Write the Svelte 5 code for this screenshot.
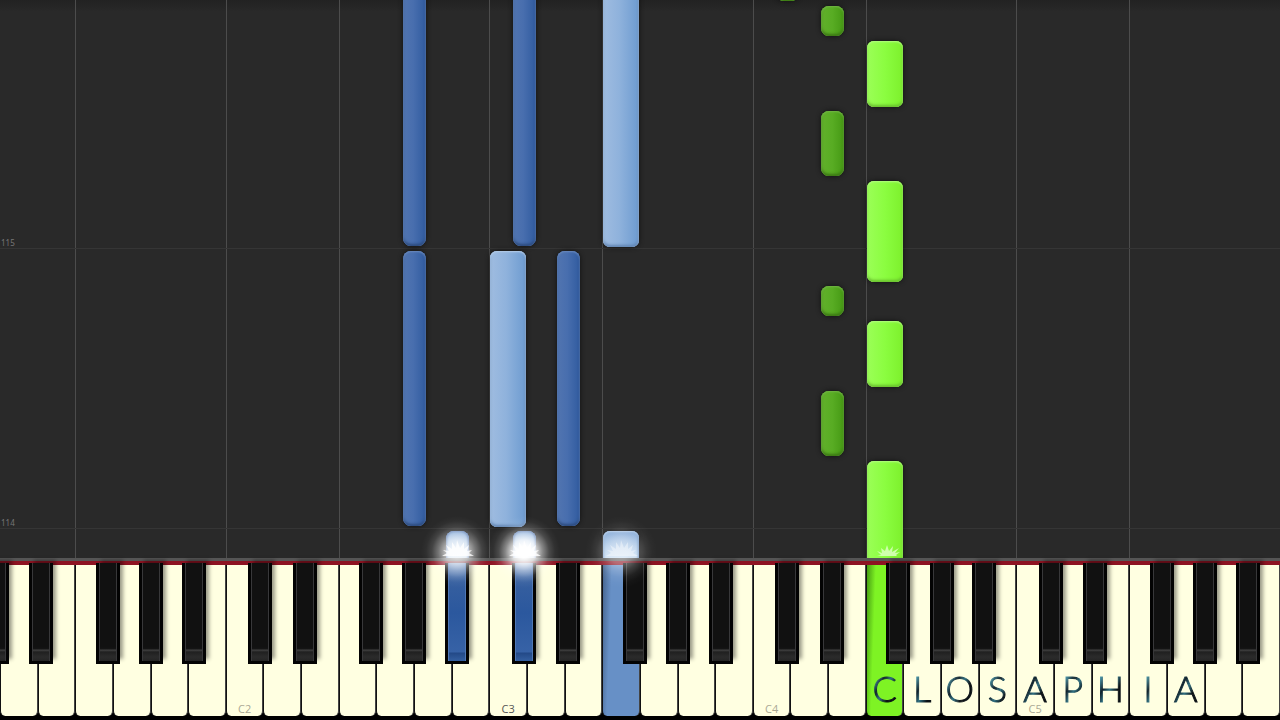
<script lang="ts">
	interface Note {
		key: string;
		at: number;
		length: number;
		hand: 'left' | 'right';
		lit?: boolean;
	}

	const WHITE_COUNT = 34;
	const unit = 100 / WHITE_COUNT;
	const names = ['C', 'D', 'E', 'F', 'G', 'A', 'B'];
	// where each black key starts, in white keys from its C
	const sharps: Record<string, number> = { 'C#': 0.59, 'D#': 1.77, 'F#': 3.54, 'G#': 4.69, 'A#': 5.83 };
	const watermark = 'CLOSAPHIA';
	const watermarkStart = 23;

	// the first white key on screen is D1
	const whites = Array.from({ length: WHITE_COUNT }, (_, i) => {
		const name = names[(i + 1) % 7];
		const octave = 1 + Math.floor((i + 1) / 7);
		return { id: name + octave, name, index: i, letter: watermark[i - watermarkStart] ?? '' };
	});

	const blacks = [1, 2, 3, 4, 5].flatMap((octave) =>
		Object.entries(sharps).map(([name, offset]) => ({ id: name + octave, left: (octave - 1) * 7 - 1 + offset }))
	);

	const notes: Note[] = [
		{ key: 'G#2', at: 312, length: 290, hand: 'left' },
		{ key: 'G#2', at: 32, length: 275, hand: 'left' },
		{ key: 'A#2', at: -8, length: 35, hand: 'left', lit: true },
		{ key: 'C#3', at: 312, length: 290, hand: 'left' },
		{ key: 'C#3', at: -8, length: 35, hand: 'left', lit: true },
		{ key: 'C3', at: 31, length: 276, hand: 'left' },
		{ key: 'D#3', at: 32, length: 275, hand: 'left' },
		{ key: 'F3', at: 311, length: 290, hand: 'left' },
		{ key: 'F3', at: -8, length: 35, hand: 'left', lit: true },
		{ key: 'C#4', at: 557, length: 30, hand: 'right' },
		{ key: 'D#4', at: 522, length: 30, hand: 'right' },
		{ key: 'D#4', at: 382, length: 65, hand: 'right' },
		{ key: 'D#4', at: 242, length: 30, hand: 'right' },
		{ key: 'D#4', at: 102, length: 65, hand: 'right' },
		{ key: 'F4', at: 451, length: 66, hand: 'right' },
		{ key: 'F4', at: 276, length: 101, hand: 'right' },
		{ key: 'F4', at: 171, length: 66, hand: 'right' },
		{ key: 'F4', at: -8, length: 105, hand: 'right' }
	];

	const measures = [
		{ number: 115, at: 309 },
		{ number: 114, at: 29 }
	];

	const sparks = [
		{ key: 'A#2', glow: 'strong' },
		{ key: 'C#3', glow: 'full' },
		{ key: 'F3', glow: 'soft' },
		{ key: 'F4', glow: 'none' }
	];

	const pressed: Record<string, string> = { 'A#2': 'left', 'C#3': 'left', F3: 'left', F4: 'right' };

	function keyLeft(id: string) {
		const black = blacks.find((k) => k.id === id);
		return (black ? black.left : whites.find((k) => k.id === id)!.index) * unit;
	}
</script>

<main>
	<section class="roll" aria-label="Notes">
		{#each whites.filter((k) => k.index > 0 && (k.name === 'C' || k.name === 'F')) as line}
			<div class="line" style="left: {line.index * unit}%"></div>
		{/each}
		{#each measures as measure}
			<div class="measure" style="bottom: {measure.at}px"><span>{measure.number}</span></div>
		{/each}
		{#each notes as note}
			<div
				class="note {note.hand}"
				class:sharp={note.key.includes('#')}
				class:lit={note.lit}
				style="left: {keyLeft(note.key)}%; bottom: {note.at}px; height: {note.length}px"
			></div>
		{/each}
	</section>

	<section class="keyboard" aria-label="Keyboard">
		<div class="felt"></div>
		<div class="whites">
			{#each whites as key}
				<button class="white {pressed[key.id] ?? ''}" aria-label={key.id}>
					{#if key.letter}
						<span class="letter">{key.letter}</span>
					{/if}
					{#if key.name === 'C'}
						<span class="octave" class:active={key.id === 'C3'}>{key.id}</span>
					{/if}
				</button>
			{/each}
		</div>
		{#each blacks as key}
			<button class="black {pressed[key.id] ?? ''}" aria-label={key.id} style="left: {key.left * unit}%"><i></i></button>
		{/each}
		{#each sparks as spark}
			<div
				class="spark {spark.glow}"
				class:wide={!spark.key.includes('#')}
				style="left: {keyLeft(spark.key)}%"
			>
				<svg viewBox="0 0 36 24" width="36" height="24" aria-hidden="true">
					{#if spark.glow === 'none'}
						<path d="M10 22l4-1-4-4 5 2-1-5 4 3 2-6 2 6 4-5-1 6 7-4-4 5 5-1-4 3 1 1z" />
					{:else}
						<path d="M3 22l5-3-4-3 6 1-3-6 6 4 0-7 4 6 1-8 3 8 4-6 0 7 5-4-2 6 5-1-3 3 5 3z" />
					{/if}
				</svg>
			</div>
		{/each}
	</section>
</main>

<style>
	:global(body) {
		margin: 0;
		background: #000;
	}

	main {
		display: flex;
		flex-direction: column;
		min-height: 100vh;
		overflow: hidden;
		font-family: 'Open Sans', 'Noto Sans', sans-serif;
	}

	.roll {
		position: relative;
		flex: 1;
		overflow: hidden;
		background: linear-gradient(#222, #292929 12px);
	}

	.line {
		position: absolute;
		top: 0;
		bottom: 0;
		width: 1px;
		background: #4c4c4c;
	}

	.measure {
		position: absolute;
		left: 0;
		right: 0;
		border-bottom: 1px solid #353535;
		color: #777;
		font-family: 'Noto Sans', sans-serif;
		font-size: 8px;
		line-height: 10px;
	}

	.measure span {
		margin-left: 1px;
	}

	.note {
		position: absolute;
		box-sizing: border-box;
		width: 36px;
		margin-left: 1px;
		border-radius: 7px;
	}

	.note.sharp {
		width: 23px;
		border-radius: 8px;
	}

	.note.left {
		background: linear-gradient(90deg, #9fbce0, #8fb2dc 45%, #6d9bd0);
		box-shadow: inset 0 1px 2px #b7cfea, inset 0 -2px 3px #5f83b1, inset 1px 0 2px #a9c6e8, inset -1px 0 2px #7397c4, 0 0 5px #111;
	}

	.note.left.sharp {
		background: linear-gradient(90deg, #5275b0, #486eae 45%, #305b9f);
		box-shadow: inset 0 1px 2px #6a8abd, inset 0 -2px 3px #2a4779, inset 1px 0 2px #5d81b9, inset -1px 0 2px #4169aa, 0 0 5px #111;
	}

	.note.right {
		background: linear-gradient(90deg, #9bff57, #8bfd40 50%, #7df02c);
		box-shadow: inset 0 1px 2px #b4ff82, inset 0 -2px 3px #66bd2c, inset 1px 0 2px #a5ff69, inset -1px 0 2px #7ce537, 0 0 5px #111;
	}

	.note.right.sharp {
		background: linear-gradient(90deg, #62b02c, #58ac23 50%, #459914);
		box-shadow: inset 0 1px 2px #72b845, inset 0 -2px 3px #397412, inset 1px 0 2px #69ae3d, inset -1px 0 2px #4d9822, 0 0 5px #111;
	}

	.note.left.lit {
		background: linear-gradient(#7fa5d4, #c5ddf4 27px);
	}

	.keyboard {
		position: relative;
		padding-bottom: 4px;
		background: #000;
	}

	.felt {
		height: 4px;
		border-top: 3px solid #555;
		background: #8d1322;
	}

	.whites {
		display: flex;
		height: 151px;
	}

	button {
		padding: 0;
		border: 0;
		font: inherit;
	}

	.white {
		display: flex;
		flex: 1 1 0;
		flex-direction: column;
		align-items: center;
		justify-content: flex-end;
		min-width: 0;
		box-sizing: border-box;
		position: relative;
		border-left: 1px solid #111;
		border-right: 1px solid #444;
		border-radius: 0 0 5px 5px;
		background: #ffffe1;
	}

	.white.left {
		background: linear-gradient(92deg, #46658f, #6790c6 9px);
	}

	.white.right {
		background: linear-gradient(92deg, #469c12, #7ef324 9px);
	}

	.letter {
		height: 41px;
		padding: 2px 1px 0;
		background: linear-gradient(120deg, #4f9aaa 6px, #10202a 14px, #2f6f80 20px, #0b1115 27px);
		background-clip: text;
		color: transparent;
		-webkit-text-stroke: 1px transparent;
		font-family: Lato, sans-serif;
		font-size: 36px;
		font-weight: 300;
		line-height: 26px;
	}

	.octave {
		position: absolute;
		bottom: 1px;
		color: #aaa995;
		font-size: 11px;
		line-height: 12px;
	}

	.octave.active {
		color: #555;
	}

	.black {
		position: absolute;
		top: 5px;
		width: 24px;
		height: 101px;
		padding: 0 3px 3px;
		background: #030303;
		box-shadow: 4px -4px 4px -1px #0006;
	}

	.black i {
		display: block;
		height: 98px;
		box-sizing: border-box;
		border: solid #38383a;
		border-width: 0 1px;
		background: linear-gradient(#111 0 84px, #151515 86px, #424242 87px, #202020 89px, #2b2b2b 94px, #242424);
	}

	.black.left i {
		border-color: #4f78b5;
		background: linear-gradient(#6d8fc0, #365f9f 18px, #2b589e 50px, #3762a6 89px, #234987 90px, #345fa0);
	}

	.spark {
		position: absolute;
		top: -24px;
		width: 24px;
		height: 24px;
		display: flex;
		justify-content: center;
		pointer-events: none;
	}

	.spark.wide {
		width: 38px;
	}

	.spark::before {
		content: '';
		position: absolute;
		top: -18px;
		left: 50%;
		width: 72px;
		height: 72px;
		margin-left: -36px;
		background: radial-gradient(closest-side, #fff 15%, #ffffffd0 34%, #ffffff70 52%, #ffffff28 70%, #ffffff0a 86%, #fff0);
	}

	.spark.strong::before {
		opacity: 0.8;
	}

	.spark.soft::before {
		opacity: 0.45;
	}

	.spark.none::before {
		display: none;
	}

	.spark svg {
		position: relative;
		flex: none;
		fill: #fffc;
	}

	.spark.soft svg {
		fill: #fff6;
	}

	.spark.none svg {
		fill: #cfffac;
	}
</style>
